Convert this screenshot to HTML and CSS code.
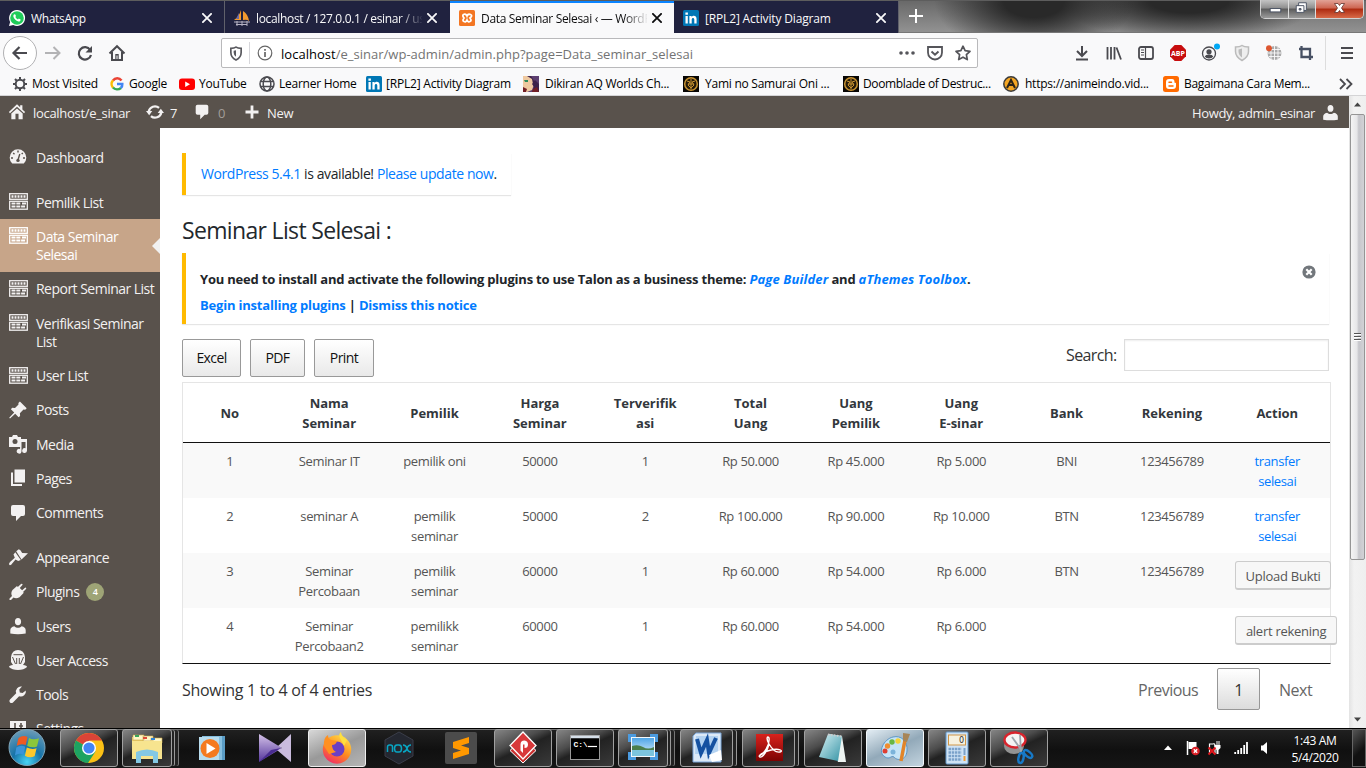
FILE: index.html
```html
<!DOCTYPE html>
<html lang="en">
<head>
<meta charset="utf-8">
<title>Data Seminar Selesai</title>
<link rel="stylesheet" href="styles.css">
</head>
<body>
<svg class="defs" width="0" height="0" aria-hidden="true">
  <defs>
    <linearGradient id="gFire" x1="0.8" y1="0" x2="0.2" y2="1"><stop offset="0" stop-color="#ffe14a"/><stop offset=".5" stop-color="#ff8a1e"/><stop offset="1" stop-color="#f0246c"/></linearGradient>
    <linearGradient id="gRed" x1="0" y1="0" x2="0" y2="1"><stop offset="0" stop-color="#d8221c"/><stop offset="1" stop-color="#7c0303"/></linearGradient>
    <linearGradient id="gSky" x1="0" y1="0" x2="0" y2="1"><stop offset="0" stop-color="#4ba3e6"/><stop offset="1" stop-color="#e4f4fb"/></linearGradient>
    <radialGradient id="gOrb" cx=".5" cy=".9" r=".9"><stop offset="0" stop-color="#48d4f4"/><stop offset=".45" stop-color="#1673a8"/><stop offset="1" stop-color="#6d9cb6"/></radialGradient>
    <linearGradient id="gNote" x1="0" y1="0" x2="1" y2="1"><stop offset="0" stop-color="#d8f2f5"/><stop offset="1" stop-color="#3593a5"/></linearGradient>
    <linearGradient id="gPurp" x1="0" y1="0" x2="0" y2="1"><stop offset="0" stop-color="#d4c2e8"/><stop offset="1" stop-color="#54359c"/></linearGradient>
  </defs>
  <symbol id="x" viewBox="0 0 10 10"><path d="M.3.3l9.400 9.400M9.700.3L.3 9.700" stroke="currentColor" stroke-width="1.800" fill="none"/></symbol>
  <symbol id="linkedin" viewBox="0 0 16 16"><rect width="16" height="16" rx="1.5" fill="#0077b5"/><path d="M2.500 6h2.300v7.500H2.500zM2.400 2.600h2.500v2.200H2.400zM6.400 6h2.200v1.100c1.300-2 5-1.700 5 1.900v4.500h-2.300V9.600c0-2.200-2.600-2.200-2.600 0v3.900H6.400z" fill="#fff"/></symbol>
  <symbol id="house" viewBox="0 0 20 20"><path d="M10 1.500L1 10l1.200 1.300L10 4.100l7.800 7.200L19 10l-3-2.900V2.500h-2.500v2.300z" fill="currentColor"/><path d="M10 6l-6.300 5.700V18h12.600v-6.300zm-1.700 6h3.400v6H8.300z" fill="currentColor" fill-rule="evenodd"/></symbol>
  <symbol id="comment" viewBox="0 0 20 20"><path d="M5 2h10q2 0 2 2v7q0 2-2 2h-2l-5 5v-5H5q-2 0-2-2V4q0-2 2-2z" fill="currentColor"/></symbol>
  <symbol id="user" viewBox="0 0 20 20"><path d="M10 9.300c-1.900 0-3.100-1.500-3.100-3.600S8 2 10 2s3.100 1.500 3.100 3.700-1.200 3.600-3.100 3.600zM2.300 17.500v-3.200c0-2.200 1.400-3.500 4.100-4.100 1 1 2.300 1.500 3.600 1.500s2.600-.5 3.600-1.500c2.700.6 4.100 1.900 4.100 4.100v3.200q-7.700 1.500-15.400 0z" fill="currentColor"/></symbol>
  <symbol id="forms" viewBox="0 0 19 17"><g fill="none" stroke="currentColor" stroke-width="1.300"><rect x=".7" y=".7" width="17.600" height="5.600"/><rect x=".7" y="8.300" width="17.600" height="7.900"/></g><path d="M2.500 3.500h14" stroke="currentColor" stroke-width="2.300" stroke-dasharray="2 1"/><path d="M2.500 10.500h9.500M13 10.500h4M2.500 13.500h14" stroke="currentColor" stroke-width="1.800" stroke-dasharray="4 .8"/></symbol>
  <symbol id="dash" viewBox="0 0 20 20"><path d="M4.200 16.500A8.300 8.300 0 1 1 15.800 16.500z" fill="currentColor"/><path d="M10 3.500v2M5.200 6l1.300 1.200M3 11h2M15 11h2M13.700 7l1.100-1.100M11.800 7L10 13" stroke="#59524c" stroke-width="1.400"/><circle cx="10" cy="13.400" r="1.700" fill="#59524c"/></symbol>
  <symbol id="pin" viewBox="0 0 20 20"><path d="M10.400 3l1.500-1.400 6.800 6.600-1.500 1.500-1.700-.2-3.600 3.700.2 2.800-1.500 1.300-3.400-3.500L2 18.500l-.8-.7 5-5.300-3.300-3.300 1.300-1.400 2.800.2 3.500-3.500z" fill="currentColor"/></symbol>
  <symbol id="media" viewBox="0 0 20 20"><path d="M1 3h3l1-2h4l1 2h3v10H1z" fill="currentColor"/><circle cx="7" cy="7.500" r="2.500" fill="#59524c"/><path d="M12.500 5H19v11.500a2.400 2.400 0 1 1-1.500-2.200V8h-4v9.500A2.400 2.400 0 1 1 12 15z" fill="currentColor"/></symbol>
  <symbol id="pages" viewBox="0 0 20 20"><path d="M6.500 1.500H17v13H6.500zM3 4.500h2v11.500h9V18H3z" fill="currentColor"/></symbol>
  <symbol id="brush" viewBox="0 0 20 20"><path d="M8.200 3.200l2.600-2 1.600 1 1.800 2.900 5.800.2-6.500 6.200zM7.300 4.200l5.500 7.700-2.600 1.200-2.700-1.600-4.300 5.300q-2 1-2.200-.7 0-1.100 1.300-2.300l4.500-4-1.300-3.300z" fill="currentColor"/></symbol>
  <symbol id="plug" viewBox="0 0 20 20"><path d="M13 2q1.400-.8 1.600.8L11.800 6l2.300 2.300 3.200-2.900q1.700.2.700 1.700L15 10l.8.8-4.300 4.500c-2.400 1.400-4.500 1.200-6 .2L3 18H1.500v-1.500L4 14c-1-2-.9-4.200.5-6L9 4l.8.9z" fill="currentColor"/></symbol>
  <symbol id="access" viewBox="0 0 20 20"><path d="M10 0q6 0 7 7v5l-2 3q4 .5 4 2-3 3-9 3t-9-3q0-1.500 4-2l-2-3V7Q4 0 10 0z" fill="currentColor"/><path d="M5.500 4.700h9M4.500 7l3 7M15.500 7l-3 7M8.700 8v6M11.300 8v6" stroke="#59524c" stroke-width="1" fill="none"/></symbol>
  <symbol id="wrench" viewBox="0 0 20 20"><path d="M17.800 5.500a5 5 0 0 1-6.700 5.700L5 17.400q-1.600 1.400-3 0t0-3l6.200-6.200a5 5 0 0 1 5.800-6.600l-2.700 3 .5 2.800 2.800.5z" fill="currentColor"/></symbol>
  <symbol id="sliders" viewBox="0 0 20 20"><path d="M2 2h16v16H2z" fill="currentColor"/><path d="M7 4v6M13 4v12M11 7h4M5 10h4" stroke="#59524c" stroke-width="1.600"/></symbol>
  <symbol id="coin" viewBox="0 0 16 16"><rect width="16" height="16" fill="#080604"/><circle cx="8" cy="8" r="6.300" fill="#271b08" stroke="#c89331" stroke-width="1.500"/><path d="M4 5l3 1-2 3 3 3M12 5L9 6l2 3-3 3M8 3v10M5 8h6" stroke="#c89331" fill="none"/></symbol>
</svg>

<div class="screen">
  <header class="browser">
    <div class="tabs">
      <div class="tab"><svg class="fav" viewBox="0 0 16 16"><path d="M8 0a8 8 0 1 1-3.800 15L0 16l1.100-4.100A8 8 0 0 1 8 0z" fill="#fff"/><circle cx="8" cy="8" r="6.800" fill="#1fcc5a"/><path d="M5.300 4.200l1 .2.700 1.700-.6.900c.6 1.200 1.400 1.900 2.600 2.400l.8-.9 1.800.9c0 1.600-1 2.200-2.200 2C7 11 4.700 8.600 4.300 6.300c0-1 .5-1.700 1-2.100z" fill="#fff"/></svg><span class="tab-name">WhatsApp</span><svg class="close"><use href="#x"/></svg></div>
      <div class="tab"><svg class="fav" viewBox="0 0 16 16"><path d="M7 0v10H0Q5 7 7 0zM9 1q5 3 6 10-2-2-6-1z" fill="#f29a2e"/><path d="M5 3v6H2z" fill="#6b6da8"/><path d="M0 12h16M2 14.500h11M3 11v5M8 11v5M13 11v5" stroke="#b5b2c3" fill="none"/></svg><span class="tab-name fade">localhost / 127.0.0.1 / esinar / us</span><svg class="close"><use href="#x"/></svg></div>
      <div class="tab active"><svg class="fav" viewBox="0 0 16 16"><rect width="16" height="16" rx="1.500" fill="#f37623"/><path d="M4.500 4.500Q7 3.500 8 6q1-2.500 3.500-1.500T11 8q2 2.500 0 3.500T8 10q-1 2.500-3 1.500T5 8Q3 5.500 4.500 4.500z" fill="none" stroke="#fff" stroke-width="1.800"/></svg><span class="tab-name fade">Data Seminar Selesai ‹ — WordPress</span><svg class="close"><use href="#x"/></svg></div>
      <div class="tab"><svg class="fav"><use href="#linkedin"/></svg><span class="tab-name t4">[RPL2] Activity Diagram</span><svg class="close"><use href="#x"/></svg></div>
      <div class="glass">
        <svg class="newtab" viewBox="0 0 14 14"><path d="M7 0v14M0 7h14" stroke="#fff" stroke-width="2"/></svg>
        <div class="winbtns">
          <span class="wb min"><svg viewBox="0 0 28 17"><rect x="9.500" y="7.500" width="11" height="3.500" fill="#fff" stroke="#4b5364"/></svg></span>
          <span class="wb max"><svg viewBox="0 0 27 17"><path d="M10 1.500h8v8h-8z" fill="#fff" stroke="#4b5364"/><path d="M7.500 4.500h8v7h-8z" fill="#fff" stroke="#4b5364"/><path d="M10.500 7.500h2v1.500h-2z" fill="#888" stroke="#4b5364"/></svg></span>
          <span class="wb quit"><svg viewBox="0 0 47 17"><path d="M18.500 2.500h3.500l1.500 2 1.500-2h3.500L25.500 7l3 4.500H25l-1.500-2-1.500 2h-3.500l3-4.500z" fill="#fff" stroke="#63332f" stroke-width=".8"/></svg></span>
        </div>
      </div>
    </div>
    <div class="toolbar">
      <div class="nav">
        <span class="back"><svg viewBox="0 0 16 16"><path d="M15 8H1.500M7.500 2l-6 6 6 6" fill="none" stroke="#4a4a4f" stroke-width="2.200"/></svg></span>
        <svg class="ico fwd" viewBox="0 0 16 16"><path d="M0 8h14.500M8.500 2l6 6-6 6" fill="none" stroke="#b3b3b5" stroke-width="2"/></svg>
        <svg class="ico reload" viewBox="0 0 16 16"><path d="M13.200 5A6.200 6.200 0 1 0 14 10" fill="none" stroke="#4a4a4f" stroke-width="2.200"/><path d="M15 1v6.500H8.500z" fill="#4a4a4f"/></svg>
        <svg class="ico" viewBox="0 0 16 16"><path d="M.5 8.500L8 1.200l7.500 7.300M3 7v8h10V7" fill="none" stroke="#4a4a4f" stroke-width="2"/><path d="M6.300 9h3.400v5H6.300z" fill="#4a4a4f"/><path d="M8 10.500V14" stroke="#fff"/></svg>
      </div>
      <div class="url">
        <svg class="shield" viewBox="0 0 14 16"><path d="M1.500 2.500Q5 2.500 7 1.200q2 1.300 5.500 1.300V7c0 4-2.500 6.500-5.500 8-3-1.500-5.500-4-5.500-8z" fill="none" stroke="#5a5a5f" stroke-width="1.800"/><path d="M7 4.500v7Q4.500 10 4.500 7V5z" fill="#5a5a5f"/></svg>
        <i class="vline"></i>
        <svg class="info" viewBox="0 0 16 16"><circle cx="8" cy="8" r="6.800" fill="none" stroke="#666" stroke-width="1.200"/><path d="M8 7v5M8 4v1.700" stroke="#666" stroke-width="1.700"/></svg>
        <span class="addr"><b>localhost</b>/e_sinar/wp-admin/admin.php?page=Data_seminar_selesai</span>
        <svg class="dots" viewBox="0 0 16 4"><circle cx="2" cy="2" r="1.800"/><circle cx="8" cy="2" r="1.800"/><circle cx="14" cy="2" r="1.800"/></svg>
        <svg class="u16" viewBox="0 0 16 16"><path d="M1 2h14v5.500a7 7 0 0 1-14 0z" fill="none" stroke="#55555a" stroke-width="1.800"/><path d="M4.500 6.500L8 9.800l3.500-3.300" fill="none" stroke="#55555a" stroke-width="1.900"/></svg>
        <svg class="u16" viewBox="0 0 16 16"><path d="M8 1.200l2.100 4.500 4.900.6-3.600 3.400.9 4.900L8 12.200l-4.300 2.400.9-4.900L1 6.300l4.900-.6z" fill="none" stroke="#55555a" stroke-width="1.700" stroke-linejoin="round"/></svg>
      </div>
      <div class="exts">
        <svg viewBox="0 0 16 16"><path d="M8 1v9.500M3 6l5 5 5-5M2 14.500h12" fill="none" stroke="#4a4a4f" stroke-width="2"/></svg>
        <svg viewBox="0 0 16 16"><path d="M1.500 2v12.500M5 2v12.500M8.500 2v12.500M10.500 2.500l4.500 12" fill="none" stroke="#4a4a4f" stroke-width="1.800"/></svg>
        <svg viewBox="0 0 16 16"><rect x="1" y="2" width="14" height="12" rx="2" fill="none" stroke="#4a4a4f" stroke-width="1.800"/><path d="M7.500 2v12M3 5h3M3 7.500h3M3 10h3" stroke="#4a4a4f" stroke-width="1.200"/></svg>
        <svg viewBox="0 0 16 16"><path d="M4.700 0h6.600L16 4.700v6.600L11.300 16H4.700L0 11.300V4.700z" fill="#c70d0e"/><text x="8" y="10.700" text-anchor="middle" class="abp" textLength="14">ABP</text></svg>
        <svg viewBox="0 0 16 16"><circle cx="7" cy="8.500" r="6.500" fill="none" stroke="#4a4a4f" stroke-width="1.300"/><circle cx="7" cy="6.800" r="2.600" fill="#4a4a4f"/><path d="M2.700 11.500Q3.500 9.500 7 9.500t4.300 2Q10 13.500 7 13.500t-4.300-2z" fill="#4a4a4f"/><circle cx="15" cy="1.500" r="3" fill="#00a8f5"/></svg>
        <svg viewBox="0 0 16 16"><path d="M1.500 2q4.500 0 6.500-1.500Q10 2 14.500 2v4.500c0 4-3 7-6.500 9-3.500-2-6.500-5-6.500-9z" fill="#eee" stroke="#bbb" stroke-width="1.500"/><path d="M8 3.500v9Q4.500 10 4.500 6.500v-2z" fill="#bbb"/></svg>
        <svg viewBox="0 0 16 16"><circle cx="8.500" cy="8" r="7" fill="#aaa"/><path d="M8.500 1v15M1.500 8h14M5 2v12M12 2v12M3 4.500h12M3 11.500h12" stroke="#f9f9fa" stroke-width=".9"/><circle cx="3" cy="3.300" r="3" fill="#dd5630"/></svg>
        <svg viewBox="0 0 16 16"><path d="M3.500 1v11H15M1 4h11v11" fill="none" stroke="#475063" stroke-width="2.300"/></svg>
      </div>
      <i class="bar"></i>
      <svg class="menu" viewBox="0 0 14 14"><path d="M1 2h12M1 7h12M1 12h12" stroke="#4a4a4f" stroke-width="2"/></svg>
    </div>
    <div class="marks">
      <span class="mark m1"><svg viewBox="0 0 16 16"><circle cx="8" cy="8" r="4.300" fill="none" stroke="#4a4a4f" stroke-width="2"/><path d="M8 1v2.500M8 12.500V15M1 8h2.500M12.500 8H15M3 3l2 2M11 11l2 2M13 3l-2 2M5 11l-2 2" stroke="#4a4a4f" stroke-width="2"/></svg>Most Visited</span>
      <span class="mark m2"><svg viewBox="0 0 16 16"><g fill="none" stroke-width="2.500"><path d="M12.500 4.500A5.300 5.300 0 0 0 4 4.500" stroke="#ea4335"/><path d="M4 4.300a5.500 5.500 0 0 0 0 7.300" stroke="#fbbc05"/><path d="M4 11.500c2 2.200 5.500 2.400 8 .4" stroke="#34a853"/><path d="M8 8h5.300c.1 1.500-.4 3-1.500 4" stroke="#4285f4"/></g></svg>Google</span>
      <span class="mark m3"><svg viewBox="0 0 16 16"><rect y="2.500" width="16" height="11.500" rx="3" fill="#f00"/><path d="M6.200 5.500v5.400L11 8.200z" fill="#fff"/></svg>YouTube</span>
      <span class="mark m4"><svg viewBox="0 0 16 16"><g fill="none" stroke="#4a4a4f" stroke-width="1.500"><circle cx="8" cy="8" r="7"/><ellipse cx="8" cy="8" rx="3.800" ry="7"/><path d="M2 5.500h12M2 10.500h12"/></g></svg>Learner Home</span>
      <span class="mark m5"><svg><use href="#linkedin"/></svg>[RPL2] Activity Diagram</span>
      <span class="mark m6"><svg viewBox="0 0 16 16"><rect width="16" height="16" fill="#5d3f70"/><path d="M0 0h7l5 6-3 8-5 2H0z" fill="#efc9a0"/><path d="M4 0l5 3 1 5 2-2L8 0zM9 8l2 3-2 5h7V8l-4-4z" fill="#3d224a"/><path d="M1 4h4v2H2z" fill="#2c8b5b"/><path d="M0 11l4 2-1 3H0zM10 13l4-2 2 5H9z" fill="#731e25"/></svg>Dikiran AQ Worlds Ch...</span>
      <span class="mark m7"><svg><use href="#coin"/></svg>Yami no Samurai Oni ...</span>
      <span class="mark m8"><svg><use href="#coin"/></svg>Doomblade of Destruc...</span>
      <span class="mark m9"><svg viewBox="0 0 16 16"><circle cx="8" cy="8" r="7.200" fill="#f5a623" stroke="#3a3a3a" stroke-width="1.500"/><path d="M4 12l4-8 4 8M6 9h4" fill="none" stroke="#2c2317" stroke-width="2"/></svg>https://animeindo.vid...</span>
      <span class="mark m10"><svg viewBox="0 0 16 16"><rect width="16" height="16" rx="2.500" fill="#ff6a00"/><path d="M6 3h3q2.500 0 2.500 3v.8h.8q.7 0 .7.700V10q0 3-3 3H6q-3 0-3-3V6q0-3 3-3z" fill="#fff"/><path d="M6 6.200h2.500M6 9.900h4" stroke="#ff6a00" stroke-width="1.500" stroke-linecap="round"/></svg>Bagaimana Cara Mem...</span>
      <svg class="more" viewBox="0 0 14 12"><path d="M1 1l5 5-5 5M7.500 1l5 5-5 5" fill="none" stroke="#4a4a4f" stroke-width="1.800"/></svg>
    </div>
  </header>

  <div class="viewport">
    <div class="page">
      <div class="adminbar">
        <svg class="ab-home"><use href="#house"/></svg><span class="ab-site">localhost/e_sinar</span>
        <svg class="ab-upd" viewBox="0 0 20 20"><path d="M3 9.500a7 7 0 0 1 11.500-4M17 10.500a7 7 0 0 1-11.500 4" fill="none" stroke="currentColor" stroke-width="2.500"/><path d="M0 9h7l-3.500 4.500zM13 11h7l-3.500-4.500z" fill="currentColor"/></svg><span class="ab-n">7</span>
        <svg class="ab-com"><use href="#comment"/></svg><span class="ab-zero">0</span>
        <svg class="ab-plus" viewBox="0 0 14 14"><path d="M7 .5v13M.5 7h13" stroke="currentColor" stroke-width="2.800"/></svg><span class="ab-new">New</span>
        <span class="howdy">Howdy, admin_esinar</span><svg class="ab-user"><use href="#user"/></svg>
      </div>
      <div class="columns">
        <nav class="side">
          <a class="item"><svg><use href="#dash"/></svg>Dashboard</a>
          <a class="item gap"><svg class="f"><use href="#forms"/></svg>Pemilik List</a>
          <a class="item two current"><svg class="f"><use href="#forms"/></svg>Data Seminar<br>Selesai</a>
          <a class="item"><svg class="f"><use href="#forms"/></svg>Report Seminar List</a>
          <a class="item two"><svg class="f"><use href="#forms"/></svg>Verifikasi Seminar<br>List</a>
          <a class="item"><svg class="f"><use href="#forms"/></svg>User List</a>
          <a class="item"><svg><use href="#pin"/></svg>Posts</a>
          <a class="item"><svg><use href="#media"/></svg>Media</a>
          <a class="item"><svg><use href="#pages"/></svg>Pages</a>
          <a class="item"><svg><use href="#comment"/></svg>Comments</a>
          <a class="item gap"><svg><use href="#brush"/></svg>Appearance</a>
          <a class="item plugins"><svg><use href="#plug"/></svg>Plugins<span class="badge">4</span></a>
          <a class="item"><svg><use href="#user"/></svg>Users</a>
          <a class="item"><svg><use href="#access"/></svg>User Access</a>
          <a class="item"><svg><use href="#wrench"/></svg>Tools</a>
          <a class="item"><svg><use href="#sliders"/></svg>Settings</a>
        </nav>
        <main class="main">
          <div class="nag"><a>WordPress 5.4.1</a> is available! <a>Please update now</a>.</div>
          <h1>Seminar List Selesai :</h1>
          <div class="notice">
            <div class="notice-text">
              <p class="n1">You need to install and activate the following plugins to use Talon as a business theme: <a><i>Page Builder</i></a> and <a><i>aThemes Toolbox</i></a>.</p>
              <p class="n2"><a>Begin installing plugins</a> | <a>Dismiss this notice</a></p>
            </div>
            <svg class="dismiss" viewBox="0 0 14 14"><circle cx="7" cy="7" r="6.600" fill="#72777c"/><path d="M4.300 4.300l5.400 5.400M9.700 4.300L4.300 9.700" stroke="#fff" stroke-width="2.200"/></svg>
          </div>
          <div class="tools">
            <span class="btn b1">Excel</span><span class="btn b2">PDF</span><span class="btn b3">Print</span>
            <label class="search">Search: <span class="field"></span></label>
          </div>
          <div class="table">
            <div class="tr th"><span>No</span><span>Nama<br>Seminar</span><span>Pemilik</span><span>Harga<br>Seminar</span><span>Terverifik<br>asi</span><span>Total<br>Uang</span><span>Uang<br>Pemilik</span><span>Uang<br>E-sinar</span><span>Bank</span><span>Rekening</span><span>Action</span></div>
            <div class="tr odd"><span>1</span><span>Seminar IT</span><span>pemilik oni</span><span>50000</span><span>1</span><span>Rp 50.000</span><span>Rp 45.000</span><span>Rp 5.000</span><span>BNI</span><span>123456789</span><span><a>transfer<br>selesai</a></span></div>
            <div class="tr"><span>2</span><span>seminar A</span><span>pemilik<br>seminar</span><span>50000</span><span>2</span><span>Rp 100.000</span><span>Rp 90.000</span><span>Rp 10.000</span><span>BTN</span><span>123456789</span><span><a>transfer<br>selesai</a></span></div>
            <div class="tr odd"><span>3</span><span>Seminar<br>Percobaan</span><span>pemilik<br>seminar</span><span>60000</span><span>1</span><span>Rp 60.000</span><span>Rp 54.000</span><span>Rp 6.000</span><span>BTN</span><span>123456789</span><span class="act"><button class="up">Upload Bukti</button></span></div>
            <div class="tr"><span>4</span><span>Seminar<br>Percobaan2</span><span>pemilikk<br>seminar</span><span>60000</span><span>1</span><span>Rp 60.000</span><span>Rp 54.000</span><span>Rp 6.000</span><span></span><span></span><span class="act"><button class="al">alert rekening</button></span></div>
          </div>
          <div class="foot"><span class="showing">Showing 1 to 4 of 4 entries</span><span class="prev">Previous</span><span class="pg">1</span><span class="next">Next</span></div>
        </main>
      </div>
    </div>
    <div class="scroll">
      <svg class="arr" viewBox="0 0 17 17"><path d="M5 10.500l3.500-4 3.500 4z" fill="#444"/></svg>
      <div class="thumb"><i></i><i></i><i></i></div>
      <svg class="arr down" viewBox="0 0 17 17"><path d="M5 6.500l3.500 4 3.500-4z" fill="#444"/></svg>
    </div>
  </div>

  <footer class="taskbar">
    <svg class="orb" viewBox="0 0 38 38"><circle cx="19" cy="18.500" r="18" fill="url(#gOrb)" stroke="#7fa5b8" stroke-width="1"/><path d="M10.500 9q4.500-3.500 9-1l-1.800 8q-4.500-2-9 .8z" fill="#ee5a22"/><path d="M21 9q4.500 2.500 10 .2l-2 8.300q-5 2-9.800-.6z" fill="#8cc63a"/><path d="M8.300 18.500q4.500-2.800 9-.8l-1.900 8q-4.500-2-8.500.8z" fill="#3b94d8"/><path d="M18.800 18.500q5 2.500 9.800.8l-2 8q-5 2.200-9.700-.6z" fill="#fcc82c"/></svg>
    <span class="task w58 k1"><svg viewBox="0 0 32 32"><circle cx="16" cy="16" r="15" fill="#fbc116"/><path d="M16 16L3 8.500A15 15 0 0 1 29 8.500H16z" fill="#db4437"/><path d="M3 8.500A15 15 0 0 0 15 31l7.500-11.500L16 16z" fill="#1da362"/><circle cx="16" cy="16" r="7" fill="#fff"/><circle cx="16" cy="16" r="5.600" fill="#4285f4"/></svg></span>
    <span class="task w50 k2 stack"><svg viewBox="0 0 32 32"><path d="M1 5h9l2 2h18v20H1z" fill="#e8cb67"/><path d="M2 3h11v5H2zM12 4h10v5H12zM20 6h11v5H20z" fill="#fff6c6" stroke="#c9a84c" stroke-width=".6"/><path d="M1 9h30v18H1z" fill="#f7e48f"/><path d="M4 3h4v2H4z" fill="#3aa55a"/><path d="M12 5h4v2h-4z" fill="#dd4b39"/><path d="M20 6h4v2h-4z" fill="#2e82d8"/><path d="M5 20q11-5 22 0v11h-5v-7H10v7H5z" fill="#84c8e4"/></svg></span>
    <span class="task bare w58 k3"><svg viewBox="0 0 32 32"><path d="M8 4h20v24H8z" fill="#5a9cc5"/><path d="M5 4h20v24H5z" fill="#86bfdf"/><path d="M2 5h20v23H2z" fill="#b8dcee"/><circle cx="13" cy="16.500" r="9.500" fill="#f47a20"/><path d="M9.500 11v11l9-5.500z" fill="#fff"/></svg></span>
    <span class="task bare w58 k4"><svg viewBox="0 0 32 32"><path d="M0 2l23 14L0 30z" fill="url(#gPurp)"/><path d="M32 2v28L18 18l5-2-4-2z" fill="#c9bbdd"/><path d="M0 30l12-12 10-2z" fill="#4a2d92"/></svg></span>
    <span class="task w58 lit k5"><svg viewBox="0 0 32 32"><circle cx="16" cy="17.500" r="14.200" fill="url(#gFire)"/><path d="M19 6q-2-4 1-6 0 4 6 8l-3 6z" fill="#ffdf3e"/><circle cx="16" cy="17" r="7.500" fill="#6a3fc4"/><path d="M3 14Q2 6 7 3q0 4 3 5l6 1q-1 4-5 4 0 5 4 7l-7 2z" fill="#ff9022"/></svg></span>
    <span class="task bare w58 k6"><svg viewBox="0 0 32 32"><path d="M16 0l14 8v16l-14 8L2 24V8z" fill="#242730" stroke="#3a3d49"/><path d="M4.500 20v-5q0-2 2-2h1q2 0 2 2v5M14 13h2q2.500 0 2.500 3.500T16 20h-2q-2.500 0-2.500-3.500T14 13zM20 13q3 0 4 3.500t4 3.500M28 13q-3 0-4 3.500T20 20" fill="none" stroke="#08a6c4" stroke-width="1.500"/></svg></span>
    <span class="task bare w58 k7"><svg viewBox="0 0 32 32"><rect width="32" height="32" rx="2" fill="#4b4b4b"/><path d="M8 10l16-5v6l-8 2.500 8 2.500v6L8 27v-6l8-2.500L8 16z" fill="#ff9800"/></svg></span>
    <span class="task w58 k8"><svg viewBox="0 0 32 32"><path d="M16 6l13 12.500L16 31 3 18.500z" fill="#c9302f" stroke="#fff"/><path d="M16 0l13 13.500L16 27 3 13.500z" fill="#d8383a" stroke="#fff" stroke-width="1.300"/><path d="M16 12.500V21l-2.500-2.500v-6q0-4 4-4 3.500.5 3.500 4t-3.500 3.500v-3.500z" fill="#fff"/></svg></span>
    <span class="task w58 k9"><svg viewBox="0 0 32 32"><rect x="1.500" y="3.500" width="29" height="24" fill="#000" stroke="#9a9a9a"/><path d="M2 5h28" stroke="#d5dfe9" stroke-width="2.500"/><text x="4.500" y="15" class="cmd">C:\</text><path d="M19 14.500h9" stroke="#fff" stroke-width="1.200"/></svg></span>
    <span class="task w50 k10 stack"><svg viewBox="0 0 32 32"><path d="M2.500 10V3.500H9M23 3.500h6.500V10M29.500 20v6.500H23M9 26.500H2.500V20" fill="none" stroke="#4b9be0" stroke-width="3"/><rect x="4.500" y="5.500" width="23" height="19" fill="url(#gSky)" stroke="#f4f8fa"/><path d="M5 14q6-2 11 1t11 0v4H5z" fill="#4b7f4e"/><path d="M5 18h22v6H5z" fill="#7cc4dd"/></svg></span>
    <span class="task w53 k11 stack short"><svg viewBox="0 0 32 32"><path d="M5 1h25v29H2V4z" fill="#dce9f7" stroke="#7aa6da"/><path d="M5 4h22v18H4z" fill="#b3d2f1"/><path d="M6 7l4 14 6-13 2 13 7-15" fill="none" stroke="#1551a1" stroke-width="4"/><path d="M18 23l12-5 1 10-10 2z" fill="#fff"/></svg></span>
    <span class="task w53 k12 stack short"><svg viewBox="0 0 32 32"><rect x="3" y="2" width="27" height="27" fill="url(#gRed)"/><path d="M6 24c5-2 11-11 10-18-2-3-3 1 0 6s7 9 11 8-1-4-9-2S4 24 7 25s8-8 9-13" fill="none" stroke="#fff" stroke-width="1.400"/></svg></span>
    <span class="task w58 k13"><svg viewBox="0 0 32 32"><path d="M11 2l14 2 4 26h-8z" fill="#eef4f2"/><path d="M11 2l14 2-4 25L2 25z" fill="url(#gNote)"/><path d="M11 2.500l14 2" stroke="#ccc" stroke-width="2" stroke-dasharray="1.500 1.500"/></svg></span>
    <span class="task w58 paint"><svg viewBox="0 0 32 32"><path d="M14 5C5 7-2 20 6 25c5 3 6-2 9 0 3 4 12 4 13-6S22 3 14 5z" fill="#c5e4f7" stroke="#5c95c4"/><circle cx="6" cy="19" r="2.500" fill="#df3e31"/><circle cx="8.500" cy="14" r="2.700" fill="#ef8e2f"/><circle cx="13" cy="10" r="2.700" fill="#69b744"/><circle cx="19" cy="9" r="2.700" fill="#f3d33b"/><circle cx="14" cy="20" r="2.500" fill="#7bb3da"/><path d="M26 8l-4 21" stroke="#e18529" stroke-width="3.500"/><path d="M24 1l7 1-3 8-4-1z" fill="#a78558"/></svg></span>
    <span class="task w58"><svg viewBox="0 0 32 32"><rect x="5" y="0" width="22" height="32" rx="1" fill="#cfe3f5" stroke="#6498c9"/><rect x="7.500" y="3" width="17" height="10" fill="#f6f1df" stroke="#d19647"/><text x="18" y="11.200" class="zero">0</text><path d="M7.500 17h13M7.500 20.500h13M7.500 24h13M7.500 27.500h13" stroke="#7aa1c9" stroke-width="2.300" stroke-dasharray="2.500 .7"/><path d="M23.500 16v7" stroke="#7aa1c9" stroke-width="2"/><path d="M23.500 24v5" stroke="#ef9b35" stroke-width="2"/></svg></span>
    <span class="task w58"><svg viewBox="0 0 32 32"><ellipse cx="11" cy="14" rx="10" ry="8" fill="#939393"/><ellipse cx="12" cy="8" rx="10.500" ry="7.500" fill="#f4f4f4" stroke="#d8242d" stroke-width="2.300"/><path d="M9 5l10 14M17 3l1 17" stroke="#9da5ac" stroke-width="1.800"/><g fill="none" stroke="#1779c7" stroke-width="2.500"><ellipse cx="18" cy="26" rx="2.500" ry="5" transform="rotate(12 18 26)"/><ellipse cx="25" cy="22" rx="2.500" ry="5" transform="rotate(-50 25 22)"/></g></svg></span>
    <div class="tray">
      <svg class="t-up" viewBox="0 0 8 5"><path d="M0 5l4-4.500L8 5z" fill="#fff"/></svg>
      <svg class="t-flag" viewBox="0 0 14 16"><path d="M1.500 1v14" stroke="#fff" stroke-width="1.500"/><path d="M2.500 2h8v7h-8z" fill="#fff"/><circle cx="9.500" cy="11" r="4.300" fill="#d91f26"/><path d="M7.800 9.300l3.400 3.400M11.200 9.300l-3.400 3.400" stroke="#fff" stroke-width="1.400"/></svg>
      <svg class="t-plug" viewBox="0 0 14 16"><path d="M5 4H1.500v9M5 4q2-1 2 2v7" fill="none" stroke="#fff" stroke-width="1.200"/><path d="M8.500 1v4h-2v3l2 2v4h2v-4l2-2V5h-1V1h-1v4H9.500V1z" fill="#fff"/><path d="M.5 7.500l7 7M7.500 7.500l-7 7" stroke="#e2151b" stroke-width="2"/></svg>
      <svg class="t-bars" viewBox="0 0 14 12"><path d="M1.200 10v2M4.200 8v4M7.200 6v6M10.200 3v9M13 0v12" stroke="#fff" stroke-width="1.800"/></svg>
      <svg class="t-vol" viewBox="0 0 8 14"><path d="M0 4.500h2L6 1v12L2 9.500H0z" fill="#fff"/></svg>
      <div class="clock"><span>1:43 AM</span><span>5/4/2020</span></div>
      <i class="peek"></i>
    </div>
  </footer>
</div>
</body>
</html>
```
FILE: styles.css
```css
* { box-sizing: border-box; }
body { margin: 0; font-family: "Open Sans", "Noto Sans", sans-serif; font-size: 13px; color: #000; background: #fff; overflow: hidden; }
svg { display: block; flex: none; overflow: visible; }
.defs { position: absolute; }
.screen { width: 1366px; height: 768px; display: flex; flex-direction: column; }
.browser { height: 96px; background: #f9f9fa; border-bottom: 1px solid #d4d4d6; flex: none; }

/* tab strip */
.tabs { height: 33px; display: flex; border-top: 1px solid #5d5d5d; background: #777; }
.tab { width: 225px; height: 32px; background: #20223f; color: #f9f9fa; display: flex; align-items: center; padding: 2px 0 0 9px; font-size: 12px; border-right: 1px solid #60616b; }
.tab:nth-child(2), .tab:nth-child(3) { border-right: 0; }
.tab.active { background: #f9f9fa; color: #0c0c0d; border-top: 2px solid #0a84ff; padding-top: 0; width: 224px; }
.fav { width: 16px; height: 16px; }
.tab-name { margin-left: 6px; width: 166px; white-space: nowrap; overflow: hidden; letter-spacing: -.33px; }
.t4 { letter-spacing: -.16px; }
.fade { -webkit-mask-image: linear-gradient(90deg, #000 86%, transparent 101%); mask-image: linear-gradient(90deg, #000 86%, transparent 101%); }
.close { width: 10px; height: 10px; margin-left: 5px; }
.glass { flex: 1; background: radial-gradient(ellipse 100px 55px at 135px 0, #292929 30%, transparent), radial-gradient(ellipse 130px 40px at 290px 0, #292929 30%, transparent), linear-gradient(#696969, #929292); display: flex; justify-content: space-between; border-bottom: 1px solid #777; }
.newtab { width: 14px; height: 14px; margin: 8px 0 0 10px; }
.winbtns { display: flex; width: 104px; height: 19px; margin: -1px 2px 0 0; border: 1px solid #d2d2d2; border-top: 0; border-radius: 0 0 5px 5px; overflow: hidden; }
.wb { background: linear-gradient(#c4c4c4, #8e8e8e 45%, #5b5b5b 50%, #9b9b9b); border-right: 1px solid #ddd; width: 28px; height: 18px; padding-top: 1px; }
.wb.max { width: 27px; }
.wb.quit { width: 47px; background: linear-gradient(#e2a296, #cd6450 45%, #ad2a10 50%, #d86a48); border: 0; }
.wb svg { width: 100%; height: 17px; }

/* navigation toolbar */
.toolbar { height: 40px; display: flex; align-items: center; }
.nav { display: flex; align-items: center; width: 221px; padding-left: 3px; }
.back { width: 34px; height: 34px; border: 1px solid #b1b1b3; border-radius: 50%; background: #fff; display: flex; align-items: center; justify-content: center; }
.back svg, .ico { width: 16px; height: 16px; }
.fwd { margin-left: 8px; }
.reload { margin: 0 16px; }
.url { width: 757px; height: 30px; border: 1px solid #b9b9bb; border-radius: 2px; background: #fff; display: flex; align-items: center; padding-left: 7px; font-size: 13px; color: #737373; }
.shield { width: 14px; height: 15px; }
.vline { width: 1px; height: 22px; background: #d7d7db; margin: 0 7px 0 6px; }
.info { width: 16px; height: 16px; }
.addr { margin-left: 8px; width: 618px; white-space: nowrap; letter-spacing: .02px; padding-top: 2px; }
.addr b { font-weight: 400; color: #000; }
.dots { width: 16px; height: 4px; fill: #55555a; }
.u16 { width: 16px; height: 16px; margin-left: 12px; }
.exts { display: flex; gap: 16px; margin-left: 96px; width: 251px; }
.exts svg { width: 16px; height: 16px; }
.abp { font: bold 7px "Open Sans", sans-serif; fill: #fff; }
.cmd { font: bold 8px "Liberation Mono", monospace; fill: #fff; }
.zero { font: 8px "DejaVu Sans", sans-serif; fill: #333; }
.bar { width: 1px; height: 34px; background: #ddd; }
.menu { width: 14px; height: 14px; margin-left: 14px; }

/* bookmarks */
.marks { height: 21px; display: flex; align-items: center; font-size: 12px; padding-left: 12px; }
.mark { display: flex; align-items: center; gap: 4px; white-space: nowrap; flex: none; letter-spacing: -.25px; }
.mark svg { width: 16px; height: 16px; }
.m1 { width: 97px; } .m2 { width: 70px; } .m3 { width: 80px; } .m4 { width: 107px; } .m5 { width: 157px; }
.m1, .m5 { letter-spacing: -.2px; }
.m6 { width: 160px; gap: 6px; } .m7 { width: 160px; gap: 6px; } .m8 { width: 160px; letter-spacing: -.35px; } .m9 { width: 160px; gap: 6px; } .m10 { width: 176px; gap: 5px; letter-spacing: -.32px; }
.more { width: 14px; height: 12px; }

/* page */
.viewport { height: 632px; display: flex; overflow: hidden; flex: none; }
.page { width: 1349px; background: #fff; display: flex; flex-direction: column; }
.adminbar { height: 32px; background: #59524c; color: #f3f1f1; display: flex; align-items: center; padding: 0 9px 0 8px; flex: none; letter-spacing: -.3px; white-space: nowrap; }
.adminbar span { padding-top: 2px; }
.ab-home { width: 18px; height: 18px; }
.ab-site { margin-left: 7px; width: 113px; }
.ab-upd { width: 18px; height: 18px; }
.ab-n { margin-left: 6px; width: 23px; }
.ab-com { width: 18px; height: 18px; }
.ab-zero { margin-left: 7px; width: 27px; color: #a29d99; }
.ab-plus { width: 14px; height: 14px; }
.ab-new { margin-left: 8px; }
.howdy { margin-left: auto; letter-spacing: -.38px; }
.ab-user { width: 19px; height: 19px; margin-left: 6px; }
.columns { display: flex; height: 600px; }
.side { width: 160px; height: 600px; background: #59524c; padding-top: 12px; overflow: hidden; flex: none; }
.item { display: block; position: relative; height: 34.250px; padding: 8.700px 0 0 36px; font-size: 14px; line-height: 18px; color: #f3f1f1; letter-spacing: -.52px; white-space: nowrap; }
.item svg { position: absolute; left: 8px; top: 7px; width: 20px; height: 20px; }
.item svg.f { left: 9px; top: 8px; width: 19px; height: 17px; }
.two { height: 52.500px; }
.gap { margin-top: 10.750px; }
.side .current { background: #c7a589; color: #fff; }
.current::after { content: ""; position: absolute; right: 0; top: 19px; border: 8px solid transparent; border-left-width: 0; border-right-color: #f1f1f1; }
.plugins { display: flex; align-items: flex-start; }
.badge { width: 18px; height: 18px; border-radius: 9px; background: #9ea476; color: #fff; font-size: 9px; font-weight: 600; text-align: center; margin-left: 7px; letter-spacing: 0; }

.main { padding: 25px 0 0 22px; width: 1189px; color: #444; }
a { color: #007bff; }
.side a { color: #f3f1f1; }
.nag { width: 329px; height: 42px; border-left: 4px solid #ffba00; background: #fff; padding: 11px 0 0 15px; line-height: 19px; font-size: 14px; color: #212529; box-shadow: 0 1px 1px rgba(0,0,0,.1); letter-spacing: -.41px; white-space: nowrap; }
h1 { font-size: 23px; font-weight: 400; line-height: 30px; margin: 20px 0 8px; color: #23282d; letter-spacing: -.66px; }
.notice { width: 1147px; height: 71px; border-left: 4px solid #ffba00; box-shadow: 0 1px 1px rgba(0,0,0,.1); display: flex; justify-content: space-between; padding: 12px 13px 0 14px; font-size: 13px; font-weight: 700; color: #212529; white-space: nowrap; }
.notice p { margin: 0; height: 26px; line-height: 28px; }
.n1 { letter-spacing: -.21px; }
.n1 i { letter-spacing: .12px; }
.n2 { letter-spacing: -.2px; }
.dismiss { width: 14px; height: 14px; }
.tools { display: flex; margin-top: 15px; height: 43px; color: #111; }
.btn { height: 38px; border: 1px solid #999; border-radius: 2px; background: linear-gradient(#fff, #e9e9e9); font-size: 14px; line-height: 36px; text-align: center; letter-spacing: -.6px; margin-right: 9px; }
.b1 { width: 59px; } .b2 { width: 55px; } .b3 { width: 60px; }
.search { margin-left: auto; width: 283px; display: flex; justify-content: space-between; font-size: 16px; line-height: 32px; color: #333; letter-spacing: -.6px; padding-right: 20px; }
.field { width: 205px; height: 32px; border: 1px solid #ddd; box-shadow: inset 0 1px 2px rgba(0,0,0,.07); }
.table { width: 1149px; border: 1px solid #e5e5e5; border-bottom: 1px solid #111; font-size: 13px; line-height: 20px; color: #555; letter-spacing: -.36px; height: 282px; }
.tr { display: grid; grid-template-columns: 93.500px repeat(10, 105.350px); text-align: center; height: 55px; padding-top: 8px; white-space: nowrap; }
.th { height: 60px; padding: 0; align-items: center; color: #32373c; font-weight: 700; border-bottom: 1px solid #111; letter-spacing: -.02px; }
.odd { background: #f9f9f9; }
.tr .act { text-align: left; padding-left: 10px; }
.act button { display: block; height: 29px; border: 1px solid #ccc; border-bottom-width: 2px; border-radius: 3px; background: #f7f7f7; color: #555; font: 13px "Open Sans", sans-serif; letter-spacing: -.27px; padding: 2px 0 0 1px; white-space: nowrap; }
.up { width: 96px; } .al { width: 102px; }
.foot { display: flex; height: 52px; font-size: 16px; line-height: 42px; color: #333; padding-top: 4px; letter-spacing: -.5px; }
.showing { width: 956px; line-height: 44px; letter-spacing: -.28px; }
.prev, .next { color: #666; line-height: 45px; }
.prev { width: 79px; }
.pg { width: 43px; height: 42px; border: 1px solid #979797; border-radius: 2px; background: linear-gradient(#fff, #dcdcdc); text-align: center; line-height: 43px; }
.next { margin-left: 19px; }

/* scrollbar */
.scroll { width: 17px; background: linear-gradient(90deg, #e3e3e3, #f2f2f2 30%, #efefef); display: flex; flex-direction: column; }
.arr { width: 17px; height: 17px; }
.thumb { margin: 1px 1px 0; height: 446px; border: 1px solid #959595; border-radius: 2px; background: linear-gradient(90deg, #f4f4f4, #e6e6e8 45%, #c6c6cb 60%, #d2d2d6); display: flex; flex-direction: column; align-items: center; justify-content: center; gap: 1px; }
.thumb i { width: 7px; height: 2px; background: #555; border-bottom: 1px solid #fff; }
.down { margin-top: auto; }

/* taskbar */
.taskbar { height: 40px; background: linear-gradient(#000 0 1px, #767676 1px 2px, #202020 2px, #101010 55%, #161616); display: flex; align-items: flex-start; }
.orb { width: 38px; height: 38px; margin: 1px 0 0 8px; }
.task { height: 38px; margin: 1px 0 0 4px; border: 1px solid #a0a0a0; border-radius: 3px; background: linear-gradient(155deg, #858585, #4c4c4c 35%, #222 50%, #3a3a3a); display: flex; align-items: center; justify-content: center; flex: none; }
.task svg { width: 32px; height: 32px; }
.w58 { width: 58px; } .w53 { width: 53px; } .w50 { width: 50px; }
.bare { background: none; border-color: transparent; }
.lit { background: linear-gradient(155deg, #d8d8d8, #999 50%, #b5b5b5); border-color: #eee; }
.paint { background: linear-gradient(155deg, #e3edf4, #92a9b9 50%, #c3d4df); border-color: #f3f8fb; }
.stack { box-shadow: 3px 0 0 -1px #222, 4px 0 0 -1px #999, 7px 0 0 -1px #222, 8px 0 0 -1px #777; }
.stack.short { box-shadow: 4px 0 0 -1px #222, 5px 0 0 -1px #999; }
.k1 { margin-left: 14px; } .k3 { margin-left: 12px; }
.k11 { margin-left: 12px; }
.k12, .k13 { margin-left: 9px; }
.tray { display: flex; align-items: center; height: 39px; margin-left: auto; width: 202px; flex: none; }
.t-up { width: 8px; height: 5px; }
.t-flag { width: 14px; height: 16px; margin-left: 14px; }
.t-plug { width: 14px; height: 16px; margin-left: 8px; }
.t-bars { width: 14px; height: 12px; margin-left: 12px; }
.t-vol { width: 8px; height: 14px; margin-left: 13px; }
.clock { margin-left: 18px; width: 56px; color: #fff; font-size: 12px; line-height: 17px; display: flex; flex-direction: column; align-items: center; letter-spacing: -.35px; white-space: nowrap; padding-top: 2px; }
.peek { width: 14px; height: 38px; border: 1px solid #666; background: linear-gradient(135deg, #555, #111 60%); margin-left: auto; }
```
